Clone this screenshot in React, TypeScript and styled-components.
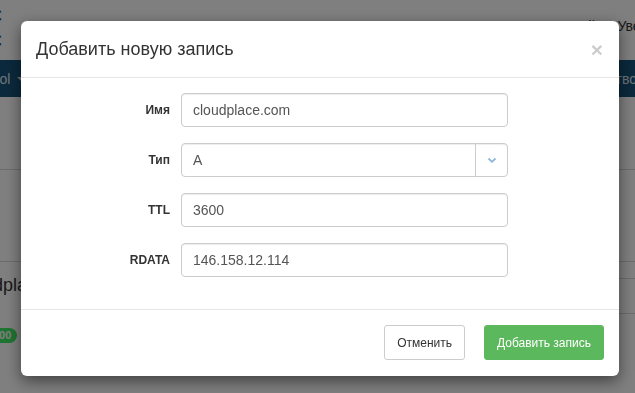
import React from 'react';
import styled, { createGlobalStyle } from 'styled-components';

const GlobalStyle = createGlobalStyle`
  html, body {
    margin: 0;
    padding: 0;
    width: 635px;
    height: 393px;
    overflow: hidden;
    background: #fff;
    font-family: "Liberation Sans", Arial, sans-serif;
  }
`;

const Page = styled.div`
  width: 635px;
  height: 393px;
  overflow: hidden;
  display: flex;
  flex-direction: column;
  color: #333;
`;

const TopBar = styled.div`
  height: 60px;
  display: flex;
  justify-content: space-between;
  align-items: flex-start;
`;

const Brand = styled.div`
  margin-left: -11px;
  padding-top: 4px;
  line-height: 25px;
  font-size: 18px;
  color: #2a3a4a;
`;

const UserMenu = styled.div`
  display: flex;
  gap: 22px;
  padding-top: 16px;
  margin-right: -70px;
  font-size: 14px;
  line-height: 20px;
  color: #333;
`;

const NavBar = styled.div`
  height: 37px;
  background: #15537a;
  display: flex;
  justify-content: space-between;
  align-items: center;
  color: #dfe8ef;
  font-size: 14px;
`;

const NavItem = styled.span<{ $left?: number; $right?: number }>`
  display: flex;
  align-items: center;
  margin-left: ${p => p.$left ?? 0}px;
  margin-right: ${p => p.$right ?? 0}px;
`;

const NavCaret = styled.span`
  margin-left: 7px;
  border-top: 4px solid #dfe8ef;
  border-left: 4px solid transparent;
  border-right: 4px solid transparent;
`;

const Content = styled.div`
  display: flex;
  flex-direction: column;
`;

const Rule = styled.div<{ $top: number }>`
  margin-top: ${p => p.$top}px;
  border-top: 1px solid #d8d8d8;
`;

const Section = styled.div`
  display: flex;
  justify-content: space-between;
  align-items: flex-start;
`;

const Column = styled.div`
  display: flex;
  flex-direction: column;
  align-items: flex-start;
`;

const Heading = styled.div`
  margin-top: 13px;
  margin-left: -40px;
  font-size: 18px;
  line-height: 20px;
  color: #333;
`;

const Badge = styled.span`
  margin-top: 33px;
  margin-left: -13px;
  padding: 2px 6px;
  border-radius: 8px;
  background: #40e862;
  color: #fff;
  font-size: 11px;
  font-weight: bold;
  line-height: 11px;
`;

const TableStub = styled.div`
  width: 120px;
  height: 34px;
  margin-top: 16px;
  margin-right: -100px;
  border-top: 1px solid #d8d8d8;
  border-bottom: 1px solid #d8d8d8;
`;

const Backdrop = styled.div`
  position: fixed;
  inset: 0;
  background: rgba(0, 0, 0, 0.5);
`;

const Modal = styled.div`
  position: fixed;
  left: 21px;
  top: 21px;
  width: 598px;
  background: #fff;
  border-radius: 6px;
  box-shadow: 0 5px 15px rgba(0, 0, 0, 0.5);
  display: flex;
  flex-direction: column;
`;

const Header = styled.div`
  display: flex;
  justify-content: space-between;
  align-items: center;
  padding: 15px;
  border-bottom: 1px solid #e5e5e5;
`;

const Title = styled.h4`
  margin: 0;
  font-size: 18px;
  font-weight: normal;
  line-height: 26px;
  color: #333;
`;

const Close = styled.button`
  border: 0;
  background: none;
  padding: 0;
  margin-right: 1px;
  font-family: "Liberation Sans", Arial, sans-serif;
  font-size: 21px;
  font-weight: bold;
  line-height: 1;
  color: #000;
  opacity: 0.2;
  cursor: pointer;
`;

const Body = styled.div`
  padding: 15px 15px 32px;
  display: grid;
  grid-template-columns: 134px 327px;
  column-gap: 11px;
  row-gap: 16px;
  align-items: center;
`;

const Label = styled.label`
  text-align: right;
  font-size: 12px;
  font-weight: bold;
  color: #333;
`;

const Input = styled.div`
  height: 34px;
  box-sizing: border-box;
  border: 1px solid #ccc;
  border-radius: 4px;
  padding: 0 11px;
  display: flex;
  align-items: center;
  font-size: 14px;
  color: #555;
  box-shadow: inset 0 1px 1px rgba(0, 0, 0, 0.075);
`;

const SelectBox = styled(Input)`
  padding-right: 0;
  justify-content: space-between;
`;

const Caret = styled.span`
  width: 31px;
  height: 100%;
  border-left: 1px solid #ccc;
  display: flex;
  align-items: center;
  justify-content: center;
`;

const Footer = styled.div`
  display: flex;
  justify-content: flex-end;
  gap: 19px;
  padding: 15px 15px 16px;
  border-top: 1px solid #e5e5e5;
`;

const Button = styled.button<{ $primary?: boolean }>`
  height: 35px;
  padding: 0 12px;
  border-radius: 3px;
  font-family: "Liberation Sans", Arial, sans-serif;
  font-size: 12px;
  cursor: pointer;
  border: 1px solid ${p => (p.$primary ? '#5cb85c' : '#ccc')};
  background: ${p => (p.$primary ? '#5cb85c' : '#fff')};
  color: ${p => (p.$primary ? '#fff' : '#333')};
`;

const fields = [
  { label: 'Имя', value: 'cloudplace.com' },
  { label: 'Тип', value: 'A', select: true },
  { label: 'TTL', value: '3600' },
  { label: 'RDATA', value: '146.158.12.114' },
];

const App = () => (
  <>
    <GlobalStyle />
    <Page>
      <TopBar>
        <Brand>C<br />C</Brand>
        <UserMenu>
          <span>Русский</span>
          <span>Уведомления</span>
        </UserMenu>
      </TopBar>
      <NavBar>
        <NavItem $left={-41}>
          Protocol
          <NavCaret />
        </NavItem>
        <NavItem $right={-2}>Количество</NavItem>
      </NavBar>
      <Content>
        <Rule $top={72} />
        <Rule $top={91} />
        <Section>
          <Column>
            <Heading>cloudplace.com</Heading>
            <Badge>200</Badge>
          </Column>
          <TableStub />
        </Section>
      </Content>
    </Page>
    <Backdrop />
    <Modal>
      <Header>
        <Title>Добавить новую запись</Title>
        <Close>×</Close>
      </Header>
      <Body>
        {fields.map(f => (
          <React.Fragment key={f.label}>
            <Label>{f.label}</Label>
            {f.select ? (
              <SelectBox>
                {f.value}
                <Caret>
                  <svg width="10" height="7" viewBox="0 0 10 7">
                    <path d="M1.5 1.5 L5 4.8 L8.5 1.5" fill="none" stroke="#8db6da" strokeWidth="1.8" />
                  </svg>
                </Caret>
              </SelectBox>
            ) : (
              <Input>{f.value}</Input>
            )}
          </React.Fragment>
        ))}
      </Body>
      <Footer>
        <Button>Отменить</Button>
        <Button $primary>Добавить запись</Button>
      </Footer>
    </Modal>
  </>
);

export default App;
